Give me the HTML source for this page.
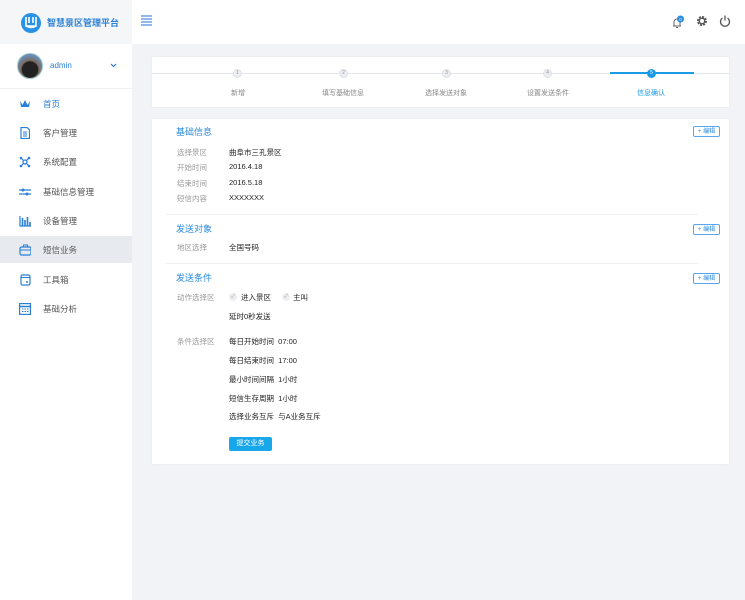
<!DOCTYPE html>
<html><head><meta charset="utf-8"><style>
*{margin:0;padding:0;box-sizing:border-box}
body{width:745px;height:600px;overflow:hidden;background:#f2f3f6;font-family:"Liberation Sans","Noto Sans CJK SC",sans-serif;font-size:8px;color:#333;position:relative}
.abs{position:absolute}
.side{left:0;top:0;width:132px;height:600px;background:#fff}
.logo{left:0;top:0;width:132px;height:44px;background:#f5f6f8}
.hdr{left:132px;top:0;width:613px;height:44px;background:#fff}
.nav{left:0;width:132px;height:28px;display:flex;align-items:center;padding-left:19px;font-size:8.5px;color:#555}
.nav .ic{width:12px;height:12px;margin-right:12px;display:flex;align-items:center;justify-content:center}
.card{background:#fff;box-shadow:0 0 2px rgba(0,0,0,.05)}
.lbl{color:#999;font-size:7.5px}
.val{color:#222;font-size:7.5px}
.sec{color:#2a8ae0;font-size:9px}
.edit{width:27px;height:11px;border:1px solid #5aa6ee;border-radius:2px;color:#2a8ae0;font-size:6px;line-height:1;display:flex;align-items:center;justify-content:center;white-space:nowrap}
.step{width:9px;height:9px;border-radius:50%;background:#eceef2;border:1px solid #dde0e5;font-size:5px;color:#999;text-align:center;line-height:7px}
.st{font-size:7px;color:#888;width:100px;text-align:center}
.hr{height:1px;background:#eef0f3}
</style></head><body>
<div class="abs side"></div>
<div class="abs logo"></div>
<svg class="abs" style="left:21px;top:12px" width="20" height="21" viewBox="0 0 20 21"><ellipse cx="10" cy="11" rx="10" ry="10" fill="#2a92e6"/><path d="M5 5v9h10V5M8 5v6M12 5v6M5 14q5 3 10 0" stroke="#fff" stroke-width="1.6" fill="none"/></svg>
<div class="abs" style="left:47px;top:16px;font-size:9px;font-weight:bold;color:#2a7fd6">智慧景区管理平台</div>
<div class="abs hdr"></div>
<svg class="abs" style="left:141px;top:15px" width="11" height="11"><path d="M0 1h11M0 4h11M0 7h11M0 10h11" stroke="#4a8fe0" stroke-width="1.3"/></svg>
<svg class="abs" style="left:671px;top:15px" width="14" height="13"><path d="M2 11h8M3 11V7a3 3 0 0 1 6 0v4M5 12.5h2" stroke="#666" stroke-width="1" fill="none"/><circle cx="9.5" cy="4" r="3.5" fill="#2a8ae0"/><text x="8.2" y="6" font-size="4.5" fill="#fff">0</text></svg>
<svg class="abs" style="left:696px;top:15px" width="12" height="12" viewBox="0 0 12 12"><circle cx="6" cy="6" r="3.7" fill="none" stroke="#555" stroke-width="2.6" stroke-dasharray="1.8 1.1"/><circle cx="6" cy="6" r="2.8" fill="none" stroke="#555" stroke-width="1.4"/></svg>
<svg class="abs" style="left:719px;top:15px" width="12" height="12"><path d="M3.5 3a4.5 4.5 0 1 0 5 0M6 0.5v5" stroke="#555" stroke-width="1.3" fill="none"/></svg>

<div class="abs" style="left:17px;top:53px;width:26px;height:26px;border-radius:50%;background:radial-gradient(circle at 50% 65%,#222 40%,#7a6a5a 45%,#6a8ab0 70%);border:1px solid #9cc"></div>
<div class="abs" style="left:50px;top:61px;font-size:8px;color:#2a7fd6">admin</div>
<svg class="abs" style="left:110px;top:63px" width="7" height="5"><path d="M1 1l2.5 2.5L6 1" stroke="#2a7fd6" stroke-width="1.2" fill="none"/></svg>
<div class="abs hr" style="left:0;top:88px;width:132px"></div>

<div class="abs nav" style="top:90px"><span class="ic"><svg width="12" height="10"><path d="M1 2l2.5 4L6 1l2.5 5L11 2l-1 6H2z" fill="#2a7fd6"/></svg></span><span style="color:#2a7fd6">首页</span></div>
<div class="abs nav" style="top:119px"><span class="ic"><svg width="10" height="12"><path d="M1 .5h6l2.5 2.5v8.5H1z" fill="none" stroke="#2a7fd6" stroke-width="1.2"/><path d="M3 5h4M3 7h4M3 9h4" stroke="#2a7fd6"/></svg></span>客户管理</div>
<div class="abs nav" style="top:148px"><span class="ic"><svg width="12" height="12"><path d="M2 2l8 8M10 2l-8 8" stroke="#2a7fd6" stroke-width="1.2"/><circle cx="6" cy="6" r="2" fill="#fff" stroke="#2a7fd6" stroke-width="1.2"/><circle cx="2" cy="2" r="1.3" fill="#2a7fd6"/><circle cx="10" cy="2" r="1.3" fill="#2a7fd6"/><circle cx="2" cy="10" r="1.3" fill="#2a7fd6"/><circle cx="10" cy="10" r="1.3" fill="#2a7fd6"/></svg></span>系统配置</div>
<div class="abs nav" style="top:178px"><span class="ic"><svg width="12" height="10"><path d="M0 3h12M0 7h12" stroke="#2a7fd6" stroke-width="1.2"/><circle cx="4" cy="3" r="1.5" fill="#2a7fd6"/><circle cx="8" cy="7" r="1.5" fill="#2a7fd6"/></svg></span>基础信息管理</div>
<div class="abs nav" style="top:207px"><span class="ic"><svg width="12" height="11"><path d="M1 0v10h11" stroke="#2a7fd6" stroke-width="1.2" fill="none"/><path d="M3.5 2v8M6 4v6M8.5 1v9M11 6v4" stroke="#2a7fd6" stroke-width="1.6"/></svg></span>设备管理</div>
<div class="abs" style="left:0;top:236px;width:132px;height:27px;background:#e7eaef"></div>
<div class="abs nav" style="top:236px;height:27px"><span class="ic"><svg width="13" height="12"><rect x="1" y="3" width="11" height="8" rx="1.5" fill="none" stroke="#2a7fd6" stroke-width="1.2"/><path d="M4.5 3V1h4v2M1 6h11" stroke="#2a7fd6" stroke-width="1.1" fill="none"/></svg></span>短信业务</div>
<div class="abs nav" style="top:266px"><span class="ic"><svg width="11" height="12"><rect x="1" y="1" width="9" height="10" rx="1.5" fill="none" stroke="#2a7fd6" stroke-width="1.2"/><path d="M1 3.5h9" stroke="#2a7fd6"/><circle cx="7" cy="8" r="1" fill="#2a7fd6"/></svg></span>工具箱</div>
<div class="abs nav" style="top:295px"><span class="ic"><svg width="12" height="12"><rect x="0.6" y="0.6" width="10.8" height="10.8" fill="none" stroke="#2a7fd6" stroke-width="1.2"/><path d="M0 3.5h12" stroke="#2a7fd6" stroke-width="1.5"/><path d="M3 6h1.5M5.5 6h1.5M8 6h1.5M3 8.5h1.5M5.5 8.5h1.5M8 8.5h1.5" stroke="#2a7fd6"/></svg></span>基础分析</div>

<div class="abs card" style="left:152px;top:57px;width:577px;height:50px"></div>
<div class="abs" style="left:152px;top:73px;width:577px;height:1px;background:#e4e7ec"></div>
<div class="abs" style="left:610px;top:72px;width:84px;height:2px;background:#1a9be6"></div>
<div class="abs step" style="left:233px;top:69px">1</div>
<div class="abs step" style="left:339px;top:69px">2</div>
<div class="abs step" style="left:442px;top:69px">3</div>
<div class="abs step" style="left:543px;top:69px">4</div>
<div class="abs step" style="left:647px;top:69px;background:#1a9be6;border-color:#1a9be6;color:#fff">5</div>
<div class="abs st" style="left:188px;top:88px">新增</div>
<div class="abs st" style="left:293px;top:88px">填写基础信息</div>
<div class="abs st" style="left:396px;top:88px">选择发送对象</div>
<div class="abs st" style="left:498px;top:88px">设置发送条件</div>
<div class="abs st" style="left:601px;top:88px;color:#1a9be6">信息确认</div>

<div class="abs card" style="left:152px;top:119px;width:577px;height:345px"></div>
<div class="abs sec" style="left:176px;top:125px">基础信息</div>
<div class="abs edit" style="left:693px;top:126px">+ 编辑</div>
<div class="abs lbl" style="left:177px;top:147px">选择景区</div><div class="abs val" style="left:229px;top:147px">曲阜市三孔景区</div>
<div class="abs lbl" style="left:177px;top:162px">开始时间</div><div class="abs val" style="left:229px;top:162px">2016.4.18</div>
<div class="abs lbl" style="left:177px;top:178px">结束时间</div><div class="abs val" style="left:229px;top:178px">2016.5.18</div>
<div class="abs lbl" style="left:177px;top:193px">短信内容</div><div class="abs val" style="left:229px;top:193px">XXXXXXX</div>
<div class="abs hr" style="left:166px;top:214px;width:532px"></div>
<div class="abs sec" style="left:176px;top:222px">发送对象</div>
<div class="abs edit" style="left:693px;top:224px">+ 编辑</div>
<div class="abs lbl" style="left:177px;top:242px">地区选择</div><div class="abs val" style="left:229px;top:242px">全国号码</div>
<div class="abs hr" style="left:166px;top:263px;width:532px"></div>
<div class="abs sec" style="left:176px;top:271px">发送条件</div>
<div class="abs edit" style="left:693px;top:273px">+ 编辑</div>
<div class="abs lbl" style="left:177px;top:292px">动作选择区</div>
<div class="abs" style="left:229px;top:293px;width:8px;height:8px;border-radius:50%;background:#eceef2;color:#aaa;font-size:6px;text-align:center;line-height:8px">✓</div>
<div class="abs val" style="left:241px;top:292px">进入景区</div>
<div class="abs" style="left:282px;top:293px;width:8px;height:8px;border-radius:50%;background:#eceef2;color:#aaa;font-size:6px;text-align:center;line-height:8px">✓</div>
<div class="abs val" style="left:293px;top:292px">主叫</div>
<div class="abs val" style="left:229px;top:311px">延时0秒发送</div>
<div class="abs lbl" style="left:177px;top:336px">条件选择区</div>
<div class="abs val" style="left:229px;top:336px">每日开始时间&nbsp; 07:00</div>
<div class="abs val" style="left:229px;top:355px">每日结束时间&nbsp; 17:00</div>
<div class="abs val" style="left:229px;top:374px">最小时间间隔&nbsp; 1小时</div>
<div class="abs val" style="left:229px;top:393px">短信生存周期&nbsp; 1小时</div>
<div class="abs val" style="left:229px;top:411px">选择业务互斥&nbsp; 与A业务互斥</div>
<div class="abs" style="left:229px;top:437px;width:43px;height:14px;background:#17a7ea;border-radius:2px;color:#fff;font-size:7px;text-align:center;line-height:14px">提交业务</div>
</body></html>
